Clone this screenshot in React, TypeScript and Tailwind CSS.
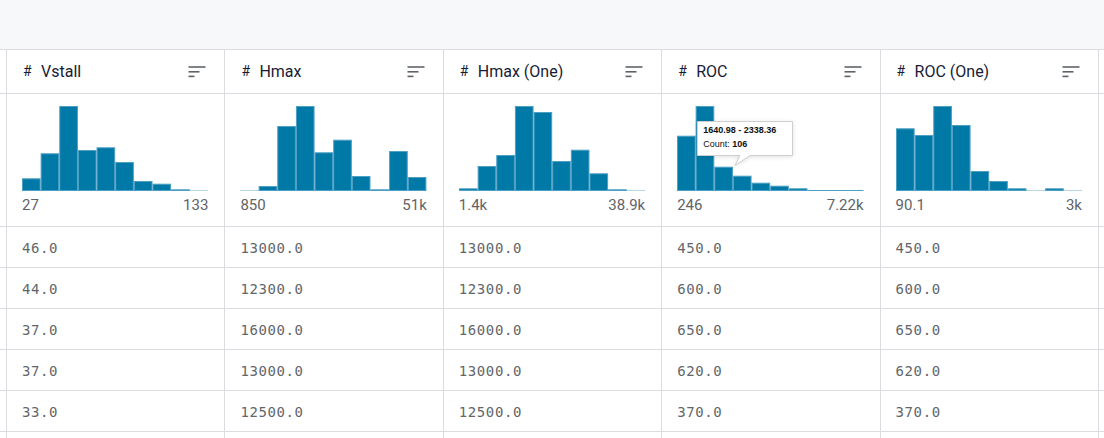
import React from "react";

type Col = {
  name: string;
  bins: number[];
  min: string;
  max: string;
  values: string[];
};

const cols: Col[] = [
  {
    name: "Vstall",
    bins: [12.7, 37.7, 85, 41, 43.7, 29, 10, 7.3, 1.7, 0],
    min: "27",
    max: "133",
    values: ["46.0", "44.0", "37.0", "37.0", "33.0"],
  },
  {
    name: "Hmax",
    bins: [0, 5, 65, 85, 38.7, 51.3, 15, 1.7, 40, 14],
    min: "850",
    max: "51k",
    values: ["13000.0", "12300.0", "16000.0", "13000.0", "12500.0"],
  },
  {
    name: "Hmax (One)",
    bins: [2.7, 25, 36, 85, 79, 30, 41.3, 17.7, 1.7, 0],
    min: "1.4k",
    max: "38.9k",
    values: ["13000.0", "12300.0", "16000.0", "13000.0", "12500.0"],
  },
  {
    name: "ROC",
    bins: [55.3, 85, 24.3, 15.3, 8.3, 5.3, 2.7, 1, 1, 1],
    min: "246",
    max: "7.22k",
    values: ["450.0", "600.0", "650.0", "620.0", "370.0"],
  },
  {
    name: "ROC (One)",
    bins: [62.7, 56, 85, 66, 20, 10, 2.7, 0, 2.7, 0],
    min: "90.1",
    max: "3k",
    values: ["450.0", "600.0", "650.0", "620.0", "370.0"],
  },
];

const W = 186.4;
const H = 86;

function Histogram({ bins }: { bins: number[] }) {
  const bw = W / bins.length;
  return (
    <svg width={W} height={H} viewBox={`0 0 ${W} ${H}`} className="block">
      <line x1={0} x2={W} y1={H - 0.5} y2={H - 0.5} stroke="#b9d6e3" strokeWidth={1} />
      {bins.map((h, i) =>
        h > 0 ? (
          <rect
            key={i}
            x={i * bw + 0.5}
            y={H - h + 0.5}
            width={bw - 1}
            height={h - 1 > 0 ? h - 1 : 0.5}
            fill="#0079a6"
            stroke="#4d9fc4"
            strokeWidth={1}
          />
        ) : null
      )}
    </svg>
  );
}

function SortIcon() {
  return (
    <svg width="18" height="12" viewBox="0 0 18 12" className="block">
      <line x1="0.5" x2="17.5" y1="1" y2="1" stroke="#5f6368" strokeWidth="1.6" />
      <line x1="0.5" x2="11.5" y1="5.8" y2="5.8" stroke="#5f6368" strokeWidth="1.6" />
      <line x1="0.5" x2="6.5" y1="10.4" y2="10.4" stroke="#5f6368" strokeWidth="1.6" />
    </svg>
  );
}

function Tooltip() {
  return (
    <div className="absolute left-[35px] top-[27px] w-[96px] h-[46px] pointer-events-none">
      <svg width="96" height="46" viewBox="0 0 96 46" className="absolute left-0 top-0 drop-shadow-[0_1px_2px_rgba(0,0,0,0.12)]">
        <path
          d="M0.5 0.5 H95.5 V34.5 H53 L38 44.5 L43 34.5 H0.5 Z"
          fill="#ffffff"
          stroke="#cfcfcf"
          strokeWidth="1"
        />
      </svg>
      <div className="absolute left-[6px] top-[3px] text-[9px] leading-[13.5px] text-[#111] font-['Liberation_Sans',Arial,sans-serif] whitespace-nowrap">
        <div className="font-bold">1640.98 - 2338.36</div>
        <div>
          Count: <span className="font-bold">106</span>
        </div>
      </div>
    </div>
  );
}

const cellBorder = "border-r border-[#dadce0]";

export default function App() {
  return (
    <div className="w-[1104px] h-[438px] overflow-hidden bg-white font-['Roboto',sans-serif]">
      <div className="h-[49px] bg-[#f7f8fa]" />
      {/* header row */}
      <div className="flex h-[44px] border-t border-[#dadce0]">
        <div className={`w-[7px] shrink-0 ${cellBorder}`} />
        {cols.map((c) => (
          <div
            key={c.name}
            className={`w-[218.4px] shrink-0 ${cellBorder} flex items-center justify-between pl-[16px] pr-[18px]`}
          >
            <div className="flex items-center text-[#181c36]">
              <span className="text-[14px] w-[18px]">#</span>
              <span className="text-[16px]">{c.name}</span>
            </div>
            <SortIcon />
          </div>
        ))}
        <div className="flex-1" />
      </div>
      {/* histogram row */}
      <div className="flex h-[133px] border-t border-[#dadce0]">
        <div className={`w-[7px] shrink-0 ${cellBorder}`} />
        {cols.map((c) => (
          <div
            key={c.name}
            className={`relative w-[218.4px] shrink-0 ${cellBorder} pt-[11px] pl-[15px] pr-[16px]`}
          >
            <Histogram bins={c.bins} />
            <div className="mt-[5px] flex justify-between text-[15px] leading-[18px] text-[#5f6368]">
              <span>{c.min}</span>
              <span>{c.max}</span>
            </div>
            {c.name === "ROC" ? <Tooltip /> : null}
          </div>
        ))}
        <div className="flex-1" />
      </div>
      {/* data rows */}
      {[0, 1, 2, 3, 4, 5].map((r) => (
        <div key={r} className="flex h-[41px] border-t border-[#dadce0]">
          <div className={`w-[7px] shrink-0 ${cellBorder}`} />
          {cols.map((c) => (
            <div
              key={c.name}
              className={`w-[218.4px] shrink-0 ${cellBorder} flex items-center pt-[2px] px-[15px] font-['DejaVu_Sans_Mono',monospace] text-[14px] tracking-[0.6px] text-[#62666b]`}
            >
              {c.values[r] ?? ""}
            </div>
          ))}
          <div className="flex-1" />
        </div>
      ))}
    </div>
  );
}
